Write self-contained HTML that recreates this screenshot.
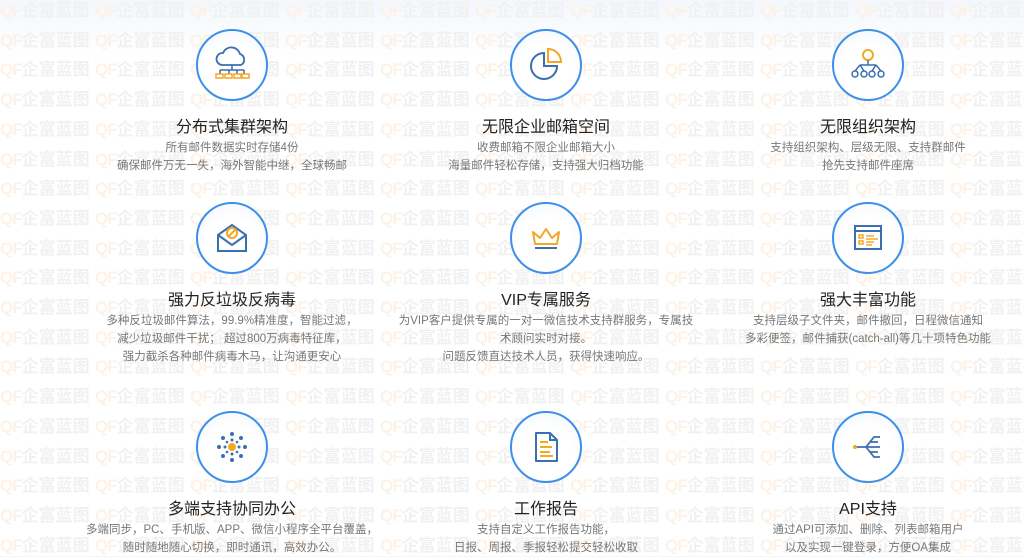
<!DOCTYPE html>
<html><head><meta charset="utf-8"><style>
*{margin:0;padding:0;box-sizing:border-box}
body{width:1024px;height:556px;overflow:hidden;background:linear-gradient(180deg,#f3f7fc 0,#fff 60px);font-family:"Liberation Sans","Noto Sans CJK SC",sans-serif;position:relative}
#wm{position:absolute;left:0;top:0;width:1024px;height:556px}
.w{position:absolute;font-size:17px;font-weight:bold;white-space:nowrap;line-height:18px}
.w b{color:#fdf2e8;font-family:"Liberation Sans",sans-serif;letter-spacing:-1px}
.w i{font-style:normal;color:#f1f1f1}
.it{position:absolute;width:320px;margin-left:-160px;text-align:center}
.c{width:72px;height:72px;border-radius:50%;border:2px solid #3d8fe8;background:radial-gradient(circle at 50% 60%,#fff 50%,#eef6fc);margin:0 auto;display:flex;align-items:center;justify-content:center}
.t{font-size:16px;color:#222;margin-top:17px;line-height:20px}
.d{font-size:11.5px;color:#777;line-height:18px;margin-top:1px}
</style></head><body>
<div id="wm"></div>
<script>
var h='';for(var r=0;r<19;r++)for(var c=0;c<11;c++)h+='<div class="w" style="left:'+(c*95)+'px;top:'+(r*29.7+2)+'px"><b>QF</b><i>企富蓝图</i></div>';document.getElementById('wm').innerHTML=h;
</script>

<div class="it" style="left:232px;top:29px"><div class="c"><svg width="44" height="40" viewBox="0 0 44 40" fill="none"><path d="M12 20a6 6 0 0 1 1-12 9 9 0 0 1 17 1 6 6 0 0 1 1 11z" stroke="#3a6fb0" stroke-width="1.8"/><path d="M22 20v5M10 25h24M10 25v4M19 25v4M27 25v4M34 25v4" stroke="#3a6fb0" stroke-width="1.5"/><rect x="6" y="29" width="7" height="4" stroke="#f5a623" stroke-width="1.5"/><rect x="15" y="29" width="7" height="4" stroke="#f5a623" stroke-width="1.5"/><rect x="24" y="29" width="7" height="4" stroke="#f5a623" stroke-width="1.5"/><rect x="32" y="29" width="7" height="4" stroke="#f5a623" stroke-width="1.5"/></svg></div>
<div class="t">分布式集群架构</div><div class="d">所有邮件数据实时存储4份<br>确保邮件万无一失，海外智能中继，全球畅邮</div></div>

<div class="it" style="left:546px;top:29px"><div class="c"><svg width="40" height="40" viewBox="0 0 40 40" fill="none"><path d="M18 8a13 13 0 1 0 13 13H18z" stroke="#3a6fb0" stroke-width="2"/><path d="M22 4a13 13 0 0 1 13 13H22z" stroke="#f5a623" stroke-width="2"/></svg></div>
<div class="t">无限企业邮箱空间</div><div class="d">收费邮箱不限企业邮箱大小<br>海量邮件轻松存储，支持强大归档功能</div></div>

<div class="it" style="left:868px;top:29px"><div class="c"><svg width="40" height="40" viewBox="0 0 40 40" fill="none"><circle cx="20" cy="10" r="5" stroke="#f5a623" stroke-width="2"/><path d="M20 15v5M12 20h16M12 20l-5 6M12 20l4 6M28 20l-4 6M28 20l5 6" stroke="#3a6fb0" stroke-width="1.5"/><circle cx="7" cy="29" r="3" stroke="#3a6fb0" stroke-width="1.5"/><circle cx="16" cy="29" r="3" stroke="#3a6fb0" stroke-width="1.5"/><circle cx="24" cy="29" r="3" stroke="#3a6fb0" stroke-width="1.5"/><circle cx="33" cy="29" r="3" stroke="#3a6fb0" stroke-width="1.5"/></svg></div>
<div class="t">无限组织架构</div><div class="d">支持组织架构、层级无限、支持群邮件<br>抢先支持邮件座席</div></div>

<div class="it" style="left:232px;top:202px"><div class="c"><svg width="40" height="40" viewBox="0 0 40 40" fill="none"><path d="M6 17l14-10 14 10v16H6z" stroke="#3a6fb0" stroke-width="2"/><path d="M6 17l14 10 14-10" stroke="#3a6fb0" stroke-width="2"/><circle cx="20" cy="15" r="5" stroke="#f5a623" stroke-width="2"/><path d="M17 18l6-6" stroke="#f5a623" stroke-width="2"/></svg></div>
<div class="t">强力反垃圾反病毒</div><div class="d">多种反垃圾邮件算法，99.9%精准度，智能过滤，<br>减少垃圾邮件干扰； 超过800万病毒特征库，<br>强力截杀各种邮件病毒木马，让沟通更安心</div></div>

<div class="it" style="left:546px;top:202px"><div class="c"><svg width="40" height="40" viewBox="0 0 40 40" fill="none"><path d="M9 26l-2-12 7 6 6-9 6 9 7-6-2 12z" stroke="#f5a623" stroke-width="2" stroke-linejoin="round"/><path d="M9 30h22" stroke="#3a6fb0" stroke-width="2"/></svg></div>
<div class="t">VIP专属服务</div><div class="d">为VIP客户提供专属的一对一微信技术支持群服务，专属技<br>术顾问实时对接。<br>问题反馈直达技术人员，获得快速响应。</div></div>

<div class="it" style="left:868px;top:202px"><div class="c"><svg width="40" height="40" viewBox="0 0 40 40" fill="none"><rect x="7" y="8" width="26" height="23" stroke="#3a6fb0" stroke-width="2"/><path d="M7 13h26" stroke="#3a6fb0" stroke-width="2"/><rect x="11" y="17" width="4" height="3" stroke="#f5a623" stroke-width="1.5"/><rect x="11" y="23" width="4" height="3" stroke="#f5a623" stroke-width="1.5"/><path d="M18 18h8M18 21h12M18 24h8M18 27h6" stroke="#f5a623" stroke-width="1.5"/></svg></div>
<div class="t">强大丰富功能</div><div class="d">支持层级子文件夹，邮件撤回，日程微信通知<br>多彩便签，邮件捕获(catch-all)等几十项特色功能</div></div>

<div class="it" style="left:232px;top:411px"><div class="c"><svg width="42" height="42" viewBox="0 0 42 42" fill="#3a6fb0"><circle cx="21" cy="21" r="4" fill="#f5a623"/><g><circle cx="21" cy="8" r="2"/><circle cx="21" cy="34" r="2"/><circle cx="8" cy="21" r="2"/><circle cx="34" cy="21" r="2"/><circle cx="12" cy="12" r="2"/><circle cx="30" cy="12" r="2"/><circle cx="12" cy="30" r="2"/><circle cx="30" cy="30" r="2"/><circle cx="21" cy="14" r="1.5"/><circle cx="21" cy="28" r="1.5"/><circle cx="14" cy="21" r="1.5"/><circle cx="28" cy="21" r="1.5"/><circle cx="16" cy="16" r="1.3"/><circle cx="26" cy="16" r="1.3"/><circle cx="16" cy="26" r="1.3"/><circle cx="26" cy="26" r="1.3"/></g></svg></div>
<div class="t">多端支持协同办公</div><div class="d">多端同步，PC、手机版、APP、微信小程序全平台覆盖，<br>随时随地随心切换，即时通讯，高效办公。</div></div>

<div class="it" style="left:546px;top:411px"><div class="c"><svg width="40" height="40" viewBox="0 0 40 40" fill="none"><path d="M10 6h14l7 7v21H10z" stroke="#3a6fb0" stroke-width="2" stroke-linejoin="round"/><path d="M24 6v7h7" stroke="#3a6fb0" stroke-width="2"/><path d="M14 15h8M14 20h12M14 25h10M14 29h13" stroke="#f5a623" stroke-width="2"/></svg></div>
<div class="t">工作报告</div><div class="d">支持自定义工作报告功能，<br>日报、周报、季报轻松提交轻松收取</div></div>

<div class="it" style="left:868px;top:411px"><div class="c"><svg width="40" height="40" viewBox="0 0 40 40" fill="none"><path d="M8 20h10M18 20l8-10h6M18 20l8 10h6M18 20h14M22 15h8M22 25h8" stroke="#3a6fb0" stroke-width="1.8"/><circle cx="7" cy="20" r="2" fill="#f5a623"/></svg></div>
<div class="t">API支持</div><div class="d">通过API可添加、删除、列表邮箱用户<br>以及实现一键登录，方便OA集成</div></div>
</body></html>
